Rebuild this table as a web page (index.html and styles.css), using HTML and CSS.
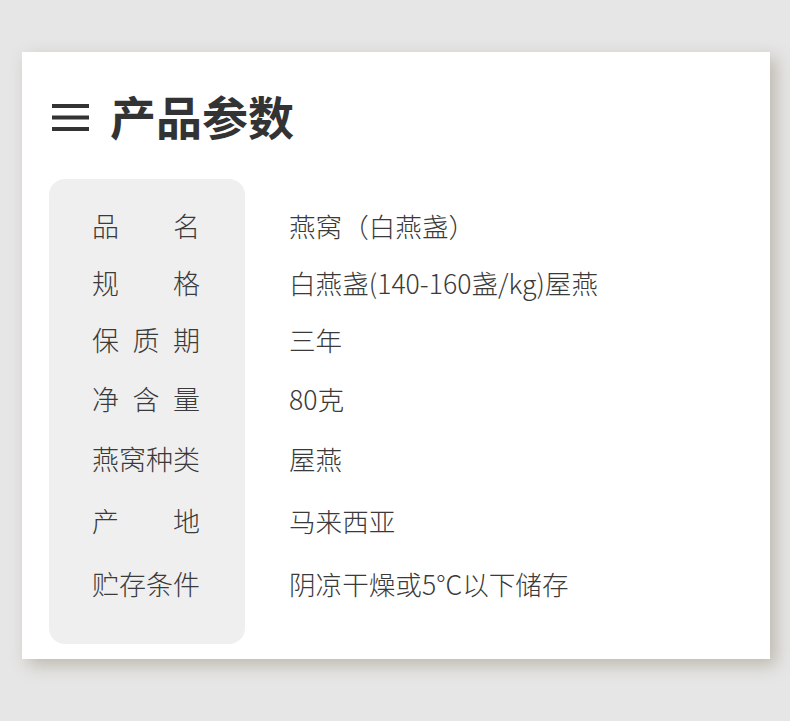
FILE: index.html
```html
<!DOCTYPE html>
<html lang="zh-CN">
<head>
<meta charset="utf-8">
<title>产品参数</title>
<link rel="stylesheet" href="styles.css">
</head>
<body>
<div class="card">
  <div class="header">
    <svg class="menu-icon" width="37" height="27" viewBox="0 0 37 27" aria-hidden="true">
      <rect x="0" y="0" width="37" height="4" fill="#333"/>
      <rect x="0" y="11.5" width="37" height="4" fill="#333"/>
      <rect x="0" y="23" width="37" height="4" fill="#333"/>
    </svg>
    <h1 class="title">产品参数</h1>
  </div>
  <div class="params">
    <div class="panel"></div>
    <div class="label r1">品名</div><div class="value r1">燕窝（白燕盏）</div>
    <div class="label r2">规格</div><div class="value r2">白燕盏(140-160盏/kg)屋燕</div>
    <div class="label r3">保质期</div><div class="value r3">三年</div>
    <div class="label r4">净含量</div><div class="value r4">80克</div>
    <div class="label r5">燕窝种类</div><div class="value r5">屋燕</div>
    <div class="label r6">产地</div><div class="value r6">马来西亚</div>
    <div class="label r7">贮存条件</div><div class="value r7">阴凉干燥或5°C以下储存</div>
  </div>
</div>
</body>
</html>
```
FILE: styles.css
```css
html, body {
  margin: 0;
  padding: 0;
}
body {
  background: #e6e6e6;
  font-family: "Noto Sans CJK SC", "Noto Sans", sans-serif;
  color: #333;
  padding: 52px 0 0 22px;
  height: 721px;
  box-sizing: border-box;
  overflow: hidden;
}
.card {
  width: 748px;
  height: 607px;
  background: #fff;
  box-sizing: border-box;
  padding: 42px 0 0 27px;
  box-shadow: 6px 6px 16px rgba(140, 128, 105, 0.45);
}
.header {
  display: flex;
  align-items: center;
  height: 46px;
  padding-left: 3px;
  margin-bottom: 39px;
}
.menu-icon {
  display: block;
  flex: none;
}
.title {
  margin: 0 0 0 21px;
  font-size: 46px;
  font-weight: 700;
  line-height: 46px;
  color: #333;
  position: relative;
  top: -2px;
}
.params {
  display: grid;
  grid-template-columns: 196px 1fr;
  grid-template-rows: 18.5px 57px 57px 57.5px 59.5px 61.5px 62.5px 63px 28.5px;
}
.panel {
  grid-column: 1;
  grid-row: 1 / -1;
  background: #efefef;
  border-radius: 16px;
}
.label, .value {
  font-size: 27px;
  line-height: 30px;
  font-weight: 300;
  align-self: center;
  color: #3a3a3a;
}
.label {
  grid-column: 1;
  width: 108px;
  margin-left: 43px;
  text-align: justify;
  text-align-last: justify;
}
.value {
  grid-column: 2;
  padding-left: 44px;
  white-space: nowrap;
  font-size: 26.6px;
}
.r1 { grid-row: 2; }
.r2 { grid-row: 3; }
.r3 { grid-row: 4; }
.r4 { grid-row: 5; }
.r5 { grid-row: 6; }
.r6 { grid-row: 7; }
.r7 { grid-row: 8; }
```
